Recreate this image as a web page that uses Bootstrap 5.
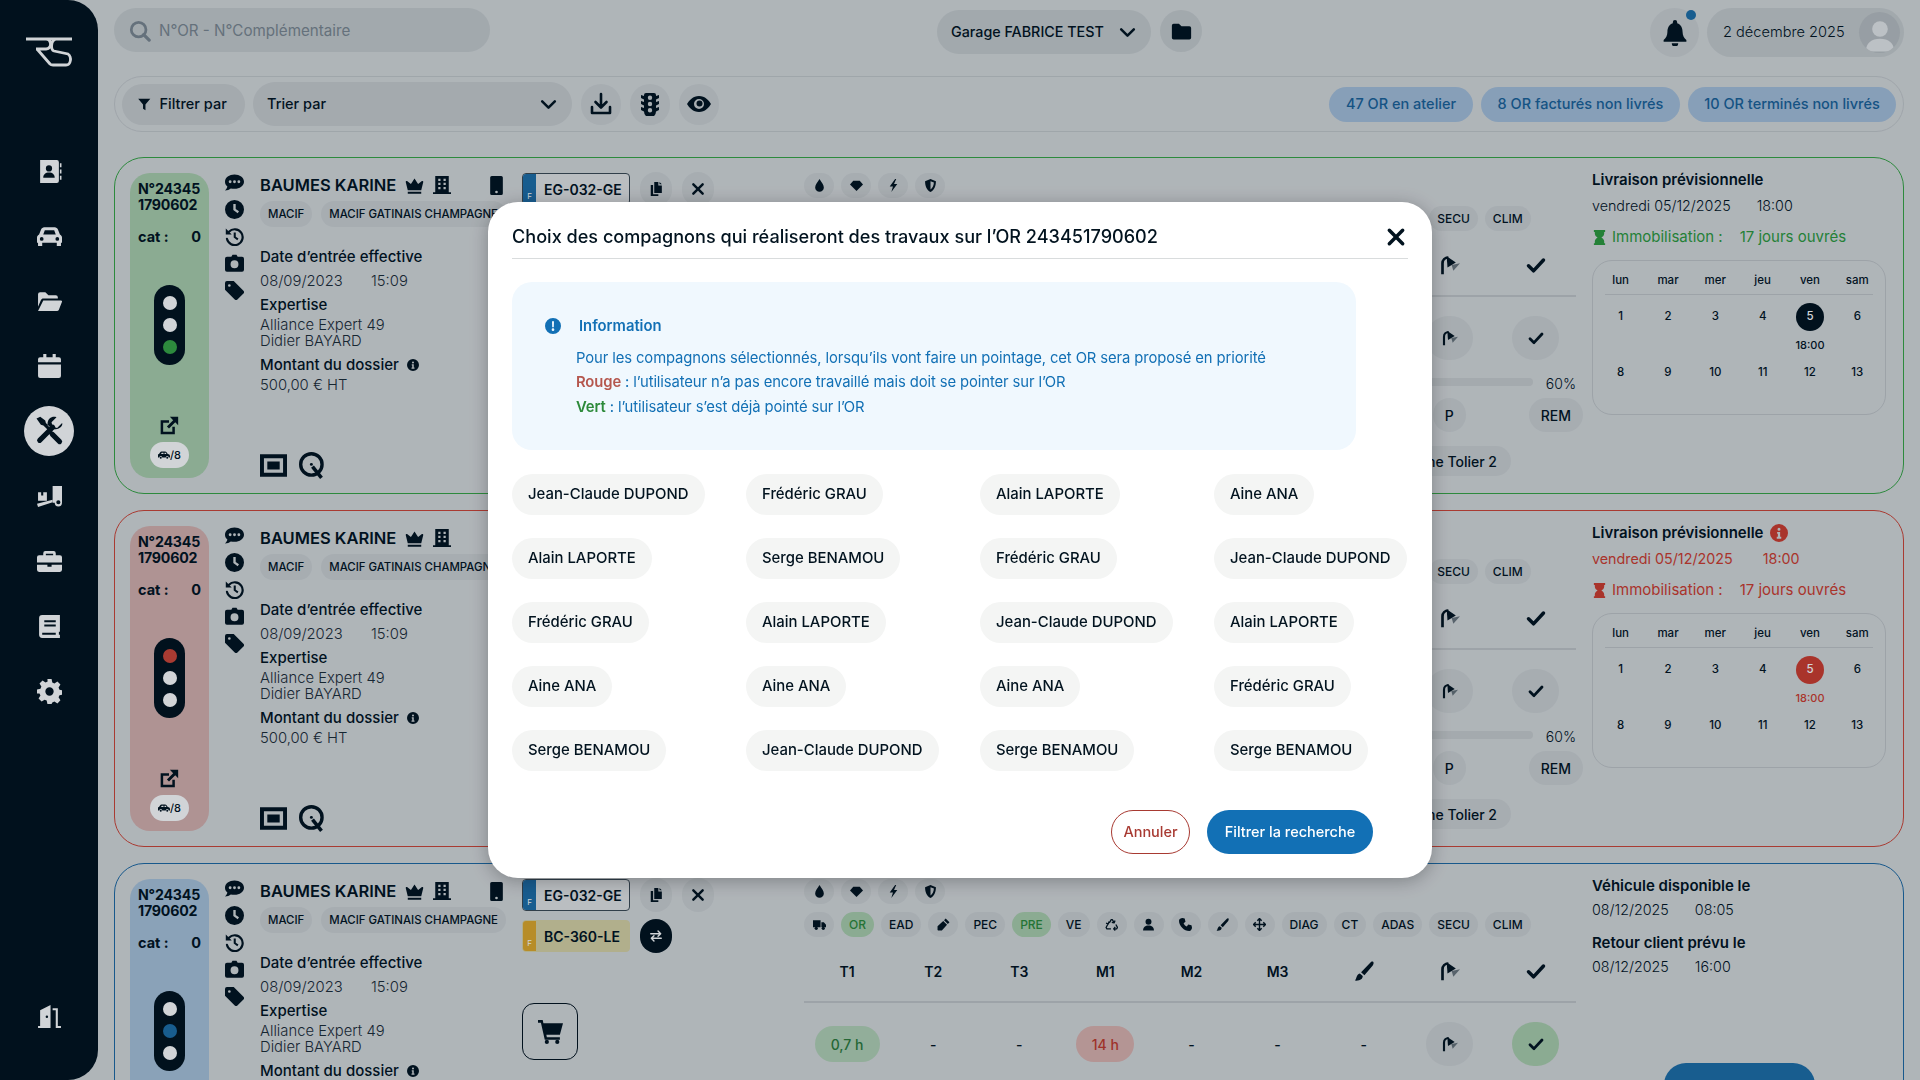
<!DOCTYPE html>
<html lang="fr">
<head>
  <meta charset="UTF-8">
  <meta name="viewport" content="width=device-width, initial-scale=1.0">
  <title>Ordres de réparation</title>
  <link href="https://cdn.jsdelivr.net/npm/bootstrap@5.3.0/dist/css/bootstrap.min.css" rel="stylesheet">
  <style>
    html, body { height: 100%; overflow: hidden; }
    body { background: #d6d9da; color: #02131f; font-family: Inter, "Noto Sans", sans-serif; font-size: 14px; }
    .ic { width: 1em; height: 1em; fill: currentColor; flex: none; display: block; }
    .app-side { width: 98px; height: 1080px; background: #02121d; border-radius: 0 30px 30px 0; color: #fff; flex: none; padding-top: 36px; }
    .side-logo { width: 50px; height: 32px; margin-bottom: 78px; }
    .side-item { width: 50px; height: 50px; margin-bottom: 15px; font-size: 25px; border-radius: 50%; }
    .side-item.on { background: #fff; color: #02121d; font-size: 30px; }
    .side-exit { margin-top: auto; margin-bottom: 39px; }
    .app-main { width: 1822px; padding: 0 16px; flex: none; }

    .top-row { height: 49px; margin-top: 8px; }
    .search-pill { width: 376px; height: 44px; background: #c6cbcc; color: #7c8790; font-size: 15.200px; padding: 2px 0 0 15px; gap: 8px; }
    .search-pill .ic { font-size: 22px; color: #7c8790; }
    .garage-pill { width: 214px; height: 44px; margin-left: 447px; margin-top: 2px; background: #c6cbcc; padding: 0 14px 0 14px; font-weight: 500; font-size: 14.300px; }
    .garage-pill .ic { font-size: 19px; }
    .round-btn { width: 42px; height: 42px; background: #c6cbcc; font-size: 21px; margin-left: 9px; margin-top: 2px; }
    .bell-btn { width: 49px; height: 49px; background: #ccd0d1; font-size: 26px; margin-left: auto; position: relative; }
    .bell-dot { position: absolute; width: 10px; height: 10px; top: 2px; right: 3px; background: #1e6ea8; border-radius: 50%; }
    .date-pill { width: 197px; height: 49px; margin-left: 8px; background: #c6cbcc; font-size: 14.600px; font-weight: 300; padding: 0 4px 0 16px; }
    .avatar { width: 41px; height: 41px; background: #b9bec1; color: #e6e8e9; overflow: hidden; }

    .tool-row { height: 56px; margin-top: 19px; border: 1px solid #c3c7c9; border-radius: 28px; padding: 0 7px; }
    .tool-pill { width: 123px; height: 41px; background: #c8cccd; font-weight: 500; font-size: 14.500px; padding: 0 0 0 15px; gap: 8px; margin-right: 8px; }
    .sort-pill { width: 319px; height: 44px; background: #c8cccd; font-weight: 500; font-size: 14.500px; padding: 0 14px 0 14px; margin-right: 9px; }
    .sort-pill .ic { font-size: 19px; }
    .tool-btn { width: 40px; height: 41px; background: #ccd0d1; font-size: 24px; margin-right: 9px; }
    .count-pill { height: 35px; background: #a5bfd9; color: #1a6299; font-weight: 500; font-size: 14.500px; margin-left: 8px; }

    .or-card { height: 337px; margin-top: 16px; border: 1px solid; border-radius: 30px; padding: 0 15px; }
    .or-green { border-color: #38a544; }
    .or-red { border-color: #cf4536; }
    .or-blue { border-color: #1e6aa4; }
    .or-status { width: 79px; height: 305px; margin-top: 15px; border-radius: 20px; padding: 8px 0 8px 8px; font-weight: 700; flex: none; }
    .or-green .or-status { background: #aaceab; }
    .or-red .or-status { background: #d6b0ad; }
    .or-blue .or-status { background: #a9c3da; }
    .or-num { font-size: 14.200px; line-height: 16px; letter-spacing: -.2px; }
    .or-cat { width: 63px; margin-top: 13px; font-size: 14.500px; }
    .feu { width: 31px; height: 80px; background: #02121d; border-radius: 16px; margin: 37px 0 0 16px; gap: 8px; }
    .feu i { width: 14px; height: 14px; background: #fff; border-radius: 50%; display: block; }
    .feu i.g { background: #38a544; }
    .feu i.r { background: #cf4536; }
    .feu i.b { background: #1e6ea8; }
    .or-open { font-size: 20px; margin: 51px 0 0 21px; }
    .or-veh { width: 39px; height: 26px; margin: 6px 0 0 12px; background: #fff; font-size: 11px; font-weight: 500; }
    .or-veh .ic { font-size: 12px; }

    .or-icons { width: 19px; margin: 15px 0 0 16px; font-size: 19px; gap: 8px; flex: none; }
    .or-info { width: 262px; margin: 17px 0 0 16px; flex: none; line-height: 16px; font-size: 14.800px; }
    .or-name { font-size: 16.500px; font-weight: 600; line-height: 20px; gap: 9px; }
    .or-name .ic { font-size: 19px; }
    .or-name > .ic:last-of-type { font-size: 18px; }
    .or-tags { margin-top: 6px; gap: 9px; white-space: nowrap; }
    .tag-pill { height: 26px; padding: 0 8px; background: #ccd0d1; font-size: 11.400px; font-weight: 500; }
    .info-label { font-weight: 500; font-size: 15px; }
    .info-val { font-weight: 300; color: #1c2b36; }
    .or-bottom { margin-top: 59px; gap: 12px; font-size: 27px; }

    .or-plates { width: 282px; margin-top: 14px; flex: none; }
    .plate-row { height: 34px; margin-bottom: 7px; }
    .plate { width: 108px; height: 32px; border: 1px solid #3c4a54; border-radius: 4px; overflow: hidden; background: #e3e5e5; font-weight: 600; font-size: 14px; }
    .plate-y { background: #d8d2a4; border-color: #d8d2a4; }
    .plate b { width: 13px; height: 100%; background: #1e6ea8; color: #fff; font-size: 8px; font-weight: 400; padding-bottom: 2px; margin-right: 8px; }
    .plate-y b { background: #e0a92a; }
    .plate-act { width: 32px; height: 34px; background: #ccd0d1; margin-left: 10px; font-size: 14px; }
    .plate-act.dark { background: #02121d; color: #fff; margin-left: 10px; }
    .cart-box { width: 56px; height: 57px; border: 1px solid #02121d; border-radius: 12px; font-size: 25px; margin-top: 50px; }

    .or-mid { width: 772px; flex: none; padding-top: 15px; }
    .mid-row { gap: 7px; margin-bottom: 8px; }
    .mini { height: 25px; min-width: 30px; padding: 0 8px; background: #ccd0d1; font-size: 12px; font-weight: 500; }
    .mini-ic { padding: 0; }
    .mini .ic { font-size: 13px; }
    .mini.ok { background: #aaceab; color: #2d8a3a; }
    .mid-grid { display: grid; grid-template-columns: repeat(9, 1fr); justify-items: center; align-items: center; margin-right: -3px; }
    .mid-head { height: 26px; margin-top: 21px; font-weight: 600; font-size: 14px; }
    .mid-head .ic { font-size: 20px; }
    .mid-line { margin: 17px 0 0; border-top: 2px solid #c0c4c6; opacity: 1; }
    .mid-vals { height: 44px; margin-top: 19px; font-weight: 500; font-size: 14px; }
    .val-pill { height: 36px; width: 65px; }
    .val-ok { background: #b3d1b5; color: #2d7a3a; }
    .val-bad { background: #dcb2ae; color: #c23a2c; width: 58px; }
    .val-round { width: 47px; height: 44px; background: #ccd0d1; font-size: 16px; }
    .val-round.ok { background: #aaceab; }
    .mid-prog { height: 19px; margin-top: 13px; gap: 13px; font-size: 14px; font-weight: 300; }
    .prog-bar { height: 8px; background: #c8cccd; border-radius: 4px; margin-top: 5px; overflow: hidden; }
    .prog-bar div { height: 100%; background: #38a544; }
    .mid-pr { margin-top: 6px; font-weight: 500; }
    .mid-pr span { height: 34px; background: #ccd0d1; padding: 0 12px; }
    .mid-to { margin-top: 14px; font-weight: 500; }
    .mid-to span { height: 30px; background: #ccd0d1; padding: 0 14px; margin-right: 65px; }

    .or-right { width: 294px; margin: 12px 0 0 16px; flex: none; }
    .right-title { font-size: 15px; font-weight: 600; line-height: 20px; gap: 7px; }
    .right-date { font-size: 14.300px; font-weight: 300; line-height: 20px; margin-top: 6px; }
    .right-date span { margin-left: 22px; }
    .right-date.tight { margin-top: 4px; }
    .right-gap { margin-top: 13px; }
    .right-imm { font-size: 15px; line-height: 20px; margin-top: 11px; gap: 5px; color: #2d9a3c; }
    .right-imm span + span { margin-left: 12px; }
    .or-red .right-date, .or-red .right-imm { color: #cf3c2e; font-weight: 400; }
    .or-red .right-date span { margin-left: 26px; }
    .cal-box { height: 155px; margin-top: 13px; border: 1px solid #c0c4c6; border-radius: 20px; padding: 11px 4px 0; font-weight: 500; font-size: 11.500px; }
    .cal-grid { display: grid; grid-template-columns: repeat(6, 1fr); justify-items: center; align-items: center; }
    .cal-head { height: 18px; }
    .cal-rule { height: 5px; margin: 0 8px; border-bottom: 1px solid #c0c4c6; }
    .cal-days { grid-auto-rows: 28px; margin-top: 8px; }
    .cal-time { height: 28px; grid-column: 5; font-size: 11px; }
    .cal-on { width: 28px; height: 28px; color: #fff; background: #02121d; border-radius: 50%; }
    .or-red .cal-on { background: #cf3c2e; }
    .or-red .cal-time { color: #cf3c2e; }
    .cal-blank { grid-column: 1 / 5; }
    .right-hot { color: #cf3c2e; font-size: 18px; }
    .deliver-btn { width: 151px; height: 44px; margin: 86px auto 0; background: #1e6ea8; color: #fff; font-weight: 500; }

    .modal-backdrop.show { background: #02131f; opacity: .18; }
    .comp-dialog { max-width: 944px; margin: 202px 0 0 488px; }
    .comp-content { height: 676px; border: 0; border-radius: 30px; box-shadow: 0 3px 18px rgba(0, 0, 0, .28); padding: 0 24px; }
    .comp-head { height: 57px; padding: 14px 0 0; border-bottom: 1px solid #d9dcdd; border-radius: 0; }
    .comp-title { font-size: 18.100px; font-weight: 500; }
    .comp-close { width: 24px; height: 24px; padding: 0; border: 0; background: none; color: #02131f; font-size: 20px; margin-right: 0; }
    .comp-info { width: 844px; height: 168px; margin-top: 23px; padding: 32px 33px; background: #f0f8fe; color: #1270b5; border: 0; border-radius: 20px; font-size: 14.800px; line-height: 24.500px; margin-bottom: 24px; }
    .comp-info .ic { font-size: 16px; margin-right: 18px; }
    .comp-info p { margin: 0 0 0 31px; letter-spacing: -.1px; }
    .comp-info-h { font-weight: 600; margin-bottom: 7px; }
    .txt-red { color: #b5574e; font-weight: 600; }
    .txt-green { color: #2d8a3a; font-weight: 600; }
    .comp-body { padding: 0; flex: none; }
    .comp-grid { display: grid; grid-template-columns: repeat(4, 234px); row-gap: 23px; }
    .comp-chip { height: 41px; padding: 0 16px; background: #f4f5f4; font-size: 14.900px; font-weight: 500; justify-self: start; white-space: nowrap; }
    .comp-foot { padding: 0 35px 0 0; border: 0; margin-top: 39px; gap: 17px; justify-content: flex-end; }
    .btn-cancel { height: 44px; width: 79px; padding: 0; margin: 0; border: 1px solid #a83a32; color: #a83a32; font-size: 14.500px; font-weight: 500; }
    .btn-apply { height: 44px; width: 166px; padding: 0; margin: 0; background: #1270b5; color: #fff; font-size: 14.500px; font-weight: 500; border: 0; }
  </style>
</head>
<body>

<svg width="0" height="0" class="position-absolute">
  <symbol id="i-book" viewBox="0 0 24 24"><path fill-rule="evenodd" d="M3 1h16a2 2 0 012 2v18a2 2 0 01-2 2H3zM11.500 6a3 3 0 100 6 3 3 0 000-6zM6 18h11c0-3-2-5-5.500-5S6 15 6 18z"/><path d="M22 4h1.500v4H22zM22 10h1.500v4H22zM22 16h1.500v4H22z"/></symbol>
  <symbol id="i-car" viewBox="0 0 24 24"><path fill-rule="evenodd" d="M7 3h10c1.500 0 2.500 1 3 2l2 5c1 .6 2 1.500 2 3v5h-1v3h-4v-3H5v3H1v-3H0v-5c0-1.500 1-2.400 2-3l2-5c.5-1 1.500-2 3-2zM7.500 6L6 10h12l-1.500-4zM4.500 12.500a1.800 1.800 0 100 3.600 1.800 1.800 0 000-3.600zM19.500 12.500a1.800 1.800 0 100 3.600 1.800 1.800 0 000-3.600z"/></symbol>
  <symbol id="i-fold-open" viewBox="0 0 24 24"><path d="M1 5a2 2 0 012-2h5l3 3h7a2 2 0 012 2v1H6c-1 0-1.800.5-2.200 1.500L1 17z"/><path d="M6 11h17c.8 0 1.200.6 1 1.300l-3 7.700c-.2.6-.8 1-1.500 1H1z"/></symbol>
  <symbol id="i-cal" viewBox="0 0 24 24"><path d="M6 0h3v3h6V0h3v3h3a2 2 0 012 2v3H1V5a2 2 0 012-2h3zM1 10h22v11a2 2 0 01-2 2H3a2 2 0 01-2-2z"/></symbol>
  <symbol id="i-tools" viewBox="0 0 24 24"><path d="M4.500 19.500L15 9M14.500 14.500l6 6" fill="none" stroke="currentColor" stroke-width="4" stroke-linecap="round"/><path d="M22.500 5.500l-4 4-3.500-1-1-3.500 4-4c-3.500-1.500-8 1.500-7 6.500l3 3c5 1 9.500-2 8.500-5zM2 2l3-1.500 4 3 .5 2 4.500 4.500-2 2-4.500-4.500-2-.5z"/></symbol>
  <symbol id="i-ramp" viewBox="0 0 24 24"><path fill-rule="evenodd" d="M15 2h9v16a3.500 3.500 0 01-7 0h-2zM20.500 15.500a2 2 0 100 4 2 2 0 000-4z"/><path d="M1 8h3v3h2V8h3.500v8H1zM0 19l15-4v2.500L1 22z"/></symbol>
  <symbol id="i-case" viewBox="0 0 24 24"><path fill-rule="evenodd" d="M8 2h8a2 2 0 012 2v2h4a2 2 0 012 2v5H0V8a2 2 0 012-2h4V4a2 2 0 012-2zM8.500 4.500V6h7V4.500z"/><path d="M0 15h10v2h4v-2h10v5a2 2 0 01-2 2H2a2 2 0 01-2-2z"/></symbol>
  <symbol id="i-manual" viewBox="0 0 24 24"><path fill-rule="evenodd" d="M5 1h17v16h-1v3h1v3H5a3 3 0 01-3-3V4a3 3 0 013-3zM5 18v2h13v-2zM7 6v2h11V6zM7 10v2h11v-2z"/></symbol>
  <symbol id="i-gear" viewBox="0 0 24 24"><path fill-rule="evenodd" d="M10 0h4l.7 3.300 2 .9 2.900-1.800 2.900 2.900-1.800 2.900.9 2 3.300.7v4l-3.300.7-.9 2 1.800 2.900-2.900 2.900-2.900-1.800-2 .9L14 24h-4l-.7-3.300-2-.9-2.900 1.800-2.900-2.900 1.800-2.900-.9-2L0 14v-4l3.300-.7.9-2L2.400 4.400l2.900-2.900 2.900 1.800 2-.9zM12 8a4 4 0 100 8 4 4 0 000-8z"/></symbol>
  <symbol id="i-exit" viewBox="0 0 24 24"><path fill-rule="evenodd" d="M13 1v22H1v-2h2V6zM9.500 11a1.200 1.200 0 100 2.400 1.200 1.200 0 000-2.400z"/><path d="M15 4h5v17h3v2h-5V6h-3z"/></symbol>
  <symbol id="i-search" viewBox="0 0 24 24"><circle cx="10.500" cy="10.500" r="8" fill="none" stroke="currentColor" stroke-width="3"/><path d="M16 16l6 6" stroke="currentColor" stroke-width="3.500" stroke-linecap="round"/></symbol>
  <symbol id="i-chev" viewBox="0 0 24 24"><path d="M4 8l8 8 8-8" fill="none" stroke="currentColor" stroke-width="3.200" stroke-linecap="round" stroke-linejoin="round"/></symbol>
  <symbol id="i-filter" viewBox="0 0 24 24"><path d="M2 3h20l-8 9.500V22l-4-2.500v-7z"/></symbol>
  <symbol id="i-down" viewBox="0 0 24 24"><path d="M12 2v13M6.500 10l5.500 5.500 5.500-5.500M3 15v6h18v-6" fill="none" stroke="currentColor" stroke-width="2.600" stroke-linecap="round" stroke-linejoin="round"/></symbol>
  <symbol id="i-feu" viewBox="0 0 24 24"><path fill-rule="evenodd" d="M8 1h8a2 2 0 012 2v1l3-1v3l-3 1.500V10l3-1v3l-3 1.500V16l3-1v3l-3 1.500A6 6 0 016 19.500L3 18v-3l3 1v-2.500L3 12V9l3 1V7.500L3 6V3l3 1V3a2 2 0 012-2zM12 3.500a2.200 2.200 0 100 4.400 2.200 2.200 0 000-4.400zM12 9.800a2.200 2.200 0 100 4.400 2.200 2.200 0 000-4.400zM12 16a2.200 2.200 0 100 4.400 2.200 2.200 0 000-4.400z"/></symbol>
  <symbol id="i-eye" viewBox="0 0 24 24"><path fill-rule="evenodd" d="M12 4C6 4 2 8.500 0 12c2 3.500 6 8 12 8s10-4.500 12-8c-2-3.500-6-8-12-8zM12 7a5 5 0 110 10 5 5 0 010-10z"/><circle cx="12.500" cy="11.500" r="3"/></symbol>
  <symbol id="i-bell" viewBox="0 0 24 24"><path d="M12 0a2 2 0 00-2 2v1C6.500 4 5 7.500 5 11c0 3.500-1.500 5.500-3.500 7.500V20h21v-1.500C20.500 16.500 19 14.500 19 11c0-3.500-1.500-7-5-8V2a2 2 0 00-2-2zM9 21.500a3 3 0 006 0z"/></symbol>
  <symbol id="i-folder" viewBox="0 0 24 24"><path d="M1 5a2 2 0 012-2h6l3 3h9a2 2 0 012 2v11a2 2 0 01-2 2H3a2 2 0 01-2-2z"/></symbol>
  <symbol id="i-user" viewBox="0 0 24 24"><circle cx="12" cy="7" r="5.500"/><path d="M2 23c0-6 4-9 10-9s10 3 10 9z"/></symbol>
  <symbol id="i-chat" viewBox="0 0 24 24"><path fill-rule="evenodd" d="M12 2C5.500 2 0 5.800 0 11c0 2.400 1.200 4.500 3 6-.3 1.800-1.300 3.500-3 5 3 0 5.500-1 7.300-2.500 1.500.4 3 .5 4.700.5 6.500 0 12-3.800 12-9s-5.500-9-12-9zM6.500 9.300a1.800 1.800 0 100 3.600 1.800 1.800 0 000-3.600zM12 9.300a1.800 1.800 0 100 3.600 1.800 1.800 0 000-3.600zM17.500 9.300a1.800 1.800 0 100 3.600 1.800 1.800 0 000-3.600z"/></symbol>
  <symbol id="i-clock" viewBox="0 0 24 24"><path fill-rule="evenodd" d="M12 0a12 12 0 100 24 12 12 0 000-24zM10.500 5h3v6.300l4.200 3-1.700 2.400-5.500-4z"/></symbol>
  <symbol id="i-hist" viewBox="0 0 24 24"><path d="M5 6a10 10 0 11-2.500 9" fill="none" stroke="currentColor" stroke-width="2.800" stroke-linecap="round"/><path d="M1 2l7.500 7.500H1zM11 7h2.600v5.200l3.400 2.400-1.500 2-4.500-3.200z"/></symbol>
  <symbol id="i-cam" viewBox="0 0 24 24"><path fill-rule="evenodd" d="M8 3.500L9.500 1h5L16 3.500h5.500A2.500 2.500 0 0124 6v14a2.500 2.500 0 01-2.500 2.500h-19A2.500 2.500 0 010 20V6a2.500 2.500 0 012.500-2.500zM12 8a5 5 0 100 10 5 5 0 000-10z"/></symbol>
  <symbol id="i-tag" viewBox="0 0 24 24"><path fill-rule="evenodd" d="M0 2.500A2.500 2.500 0 012.500 0h8.500l12.300 12.300a2.400 2.400 0 010 3.400l-7.600 7.600a2.400 2.400 0 01-3.400 0L0 11zM5.500 4a1.700 1.700 0 100 3.400 1.700 1.700 0 000-3.400z"/></symbol>
  <symbol id="i-crown" viewBox="0 0 24 24"><path d="M12 3l4.500 7L21 6.500c1-.5 2.500.3 2 1.500l-2.500 10h-17L1 8c-.5-1.200 1-2 2-1.500L7.500 10zM3.500 20h17v2.500h-17z"/></symbol>
  <symbol id="i-build" viewBox="0 0 24 24"><path fill-rule="evenodd" d="M3 0h18v21.500h3V24H0v-2.500h3zM7 3.500v3h3v-3zM14 3.500v3h3v-3zM7 9v3h3V9zM14 9v3h3V9zM7 14.500v3h3v-3zM14 14.500v3h3v-3z"/></symbol>
  <symbol id="i-mob" viewBox="0 0 24 24"><path fill-rule="evenodd" d="M6 0h12a2 2 0 012 2v20a2 2 0 01-2 2H6a2 2 0 01-2-2V2a2 2 0 012-2zM12 18.500a1.700 1.700 0 100 3.400 1.700 1.700 0 000-3.400z"/></symbol>
  <symbol id="i-info" viewBox="0 0 24 24"><path fill-rule="evenodd" d="M12 0a12 12 0 100 24 12 12 0 000-24zM12 5a2 2 0 110 4 2 2 0 010-4zM9.500 10.500h4V17h1.500v2.500H9V17h1.500v-4h-1z"/></symbol>
  <symbol id="i-warn" viewBox="0 0 24 24"><path fill-rule="evenodd" d="M12 0a12 12 0 100 24 12 12 0 000-24zM10.500 5h3l-.3 9h-2.400zM12 15.500a2 2 0 110 4 2 2 0 010-4z"/></symbol>
  <symbol id="i-ext" viewBox="0 0 24 24"><path d="M2 5h10v3H5v11h11v-6h3v9H2z"/><path d="M13 1h10v10l-3.500-3.500-7.500 7.500-2.500-2.500 7.500-7.500z"/></symbol>
  <symbol id="i-car2" viewBox="0 0 24 24"><path fill-rule="evenodd" d="M7 5h7c1.500 0 2.500.6 3.500 2l2 3c2.500.4 4.500 1.500 4.500 4v3h-2.500a3 3 0 00-6 0h-7a3 3 0 00-6 0H0v-5c0-1.500 1-2 2-2l2-3c1-1.500 1.800-2 3-2zM7.500 7.500L6 10h5V7.500zM13 7.500V10h4l-1.500-2.500z"/><circle cx="5.500" cy="17.500" r="2"/><circle cx="18.500" cy="17.500" r="2"/></symbol>
  <symbol id="i-hour" viewBox="0 0 24 24"><path d="M3 0h18v3h-1.500v2.500c0 3-2 5-4.500 6.500 2.500 1.500 4.500 3.500 4.500 6.500V21H21v3H3v-3h1.500v-2.500c0-3 2-5 4.500-6.500-2.500-1.500-4.500-3.500-4.500-6.500V3H3z"/></symbol>
  <symbol id="i-copy" viewBox="0 0 24 24"><path d="M9 0h7v6h6v13H9zM18 0l4 4h-4zM3 5h4v16h9v3H3z"/></symbol>
  <symbol id="i-x" viewBox="0 0 24 24"><path d="M4 4l16 16M20 4L4 20" fill="none" stroke="currentColor" stroke-width="4.200" stroke-linecap="round"/></symbol>
  <symbol id="i-swap" viewBox="0 0 24 24"><path d="M3 8h17M15.500 3.500L20 8l-4.500 4.500M21 16H4M8.500 11.500L4 16l4.500 4.500" fill="none" stroke="currentColor" stroke-width="2.500" stroke-linecap="round" stroke-linejoin="round"/></symbol>
  <symbol id="i-cart" viewBox="0 0 24 24"><path d="M0 1h4.500l.7 3H24l-3 11H8l.5 2.500H21V20H6.500L2.800 3.500H0z"/><circle cx="8.500" cy="22" r="2"/><circle cx="18.500" cy="22" r="2"/></symbol>
  <symbol id="i-drop" viewBox="0 0 24 24"><path d="M12 0c4 6.500 8 10.500 8 15.500a8 8 0 01-16 0C4 10.500 8 6.500 12 0z"/></symbol>
  <symbol id="i-gem" viewBox="0 0 24 24"><path d="M6 3h12l6 7-12 12L0 10z"/></symbol>
  <symbol id="i-bolt" viewBox="0 0 24 24"><path d="M15 0L5 14h6l-3 10 11-15h-6l4-9z"/></symbol>
  <symbol id="i-shield" viewBox="0 0 24 24"><path fill-rule="evenodd" d="M12 0l10 4c0 9-3 16.500-10 20C5 20.500 2 13 2 4zM12 4v15.500c3.500-2.700 6-7 6.300-13z"/></symbol>
  <symbol id="i-truck" viewBox="0 0 24 24"><path d="M0 4h14v13H0zM15.500 8H20l4 4.500V17h-8.500z"/><circle cx="6" cy="19" r="3"/><circle cx="19" cy="19" r="3"/></symbol>
  <symbol id="i-pen" viewBox="0 0 24 24"><path d="M16 1l7 7-3 3-7-7zM11.500 5.500l7 7L9 23H2l-1-1v-7z"/></symbol>
  <symbol id="i-rec" viewBox="0 0 24 24"><path d="M8 9l3.500-6h2l3 5M18.500 4.500L17 9l-4.500-1M20 12l3 5.500-1.500 2.500h-5M19 23l-3-3 3-3.500M11 20H3.500L2 17.500 5 12M2 9.500L6 11l1.500-4.500" fill="none" stroke="currentColor" stroke-width="2.400" stroke-linejoin="round"/></symbol>
  <symbol id="i-tel" viewBox="0 0 24 24"><path d="M6.500 0l4 1 1.500 6-3.500 2.500c1 3 3 5 6 6L17 12l6 1.500 1 4c0 3-2 6.500-5 6.500C9.500 24 0 14.500 0 5c0-3 3.500-5 6.500-5z"/></symbol>
  <symbol id="i-brush" viewBox="0 0 24 24"><path d="M23 1c1 1 .5 3-.5 4.500L12.500 17l-4-3.500L19.500 2c1-1 2.500-2 3.500-1zM7 15l3.500 3c0 3.500-3 6-9.500 5.500 2.500-2 1.500-7.500 6-8.500z"/></symbol>
  <symbol id="i-move" viewBox="0 0 24 24"><path d="M12 1v22M1 12h22M8 5l4-4 4 4M8 19l4 4 4-4M5 8l-4 4 4 4M19 8l4 4-4 4" fill="none" stroke="currentColor" stroke-width="2.600" stroke-linejoin="round"/></symbol>
  <symbol id="i-shower" viewBox="0 0 24 24"><path d="M3 23V10c0-4 3-7 7-7" fill="none" stroke="currentColor" stroke-width="3.200"/><path d="M8 1.500L19 9 9 15z"/><path d="M14 12l10-2-8 9z" opacity=".5"/></symbol>
  <symbol id="i-check" viewBox="0 0 24 24"><path d="M3 13l6 6L21 6" fill="none" stroke="currentColor" stroke-width="4.200" stroke-linecap="round" stroke-linejoin="round"/></symbol>
  <symbol id="i-scr" viewBox="0 0 24 24"><path fill-rule="evenodd" d="M0 2h24v20H0zM3.500 5.500v13h17v-13zM6.500 8.500h11v7h-11z"/></symbol>
  <symbol id="i-q" viewBox="0 0 24 24"><circle cx="11" cy="11" r="9.500" fill="none" stroke="currentColor" stroke-width="3"/><path d="M12 13l8 10" stroke="currentColor" stroke-width="3.200"/><circle cx="11" cy="11" r="1.300"/></symbol>
</svg>

<div class="d-flex">
  <nav class="app-side d-flex flex-column align-items-center">
    <svg class="side-logo" viewBox="0 0 50 32" fill="none" stroke="currentColor" stroke-width="2.800"><path d="M2 3h46M6 3h16c5 0 7 9 0 10H12M13 13l13 15c1 1 2 1 3 1h13c5 0 6-8 2-11L30 15c-3-1-4-10 2-12"/></svg>
    <div class="side-item d-flex align-items-center justify-content-center"><svg class="ic"><use href="#i-book"/></svg></div>
    <div class="side-item d-flex align-items-center justify-content-center"><svg class="ic"><use href="#i-car"/></svg></div>
    <div class="side-item d-flex align-items-center justify-content-center"><svg class="ic"><use href="#i-fold-open"/></svg></div>
    <div class="side-item d-flex align-items-center justify-content-center"><svg class="ic"><use href="#i-cal"/></svg></div>
    <div class="side-item on d-flex align-items-center justify-content-center"><svg class="ic"><use href="#i-tools"/></svg></div>
    <div class="side-item d-flex align-items-center justify-content-center"><svg class="ic"><use href="#i-ramp"/></svg></div>
    <div class="side-item d-flex align-items-center justify-content-center"><svg class="ic"><use href="#i-case"/></svg></div>
    <div class="side-item d-flex align-items-center justify-content-center"><svg class="ic"><use href="#i-manual"/></svg></div>
    <div class="side-item d-flex align-items-center justify-content-center"><svg class="ic"><use href="#i-gear"/></svg></div>
    <div class="side-item side-exit d-flex align-items-center justify-content-center"><svg class="ic"><use href="#i-exit"/></svg></div>
  </nav>

  <main class="app-main">
    <div class="top-row d-flex align-items-start">
      <div class="search-pill d-flex align-items-center rounded-pill"><svg class="ic"><use href="#i-search"/></svg>N°OR - N°Complémentaire</div>
      <div class="garage-pill d-flex align-items-center justify-content-between rounded-pill">Garage FABRICE TEST <svg class="ic"><use href="#i-chev"/></svg></div>
      <div class="round-btn d-flex align-items-center justify-content-center rounded-circle"><svg class="ic"><use href="#i-folder"/></svg></div>
      <div class="bell-btn d-flex align-items-center justify-content-center rounded-circle"><svg class="ic"><use href="#i-bell"/></svg><span class="bell-dot"></span></div>
      <div class="date-pill d-flex align-items-center justify-content-between rounded-pill">2 décembre 2025
        <span class="avatar d-flex align-items-end justify-content-center rounded-circle"><svg class="ic" style="font-size:34px"><use href="#i-user"/></svg></span>
      </div>
    </div>

    <div class="tool-row d-flex align-items-center">
      <div class="tool-pill d-flex align-items-center rounded-pill"><svg class="ic"><use href="#i-filter"/></svg>Filtrer par</div>
      <div class="sort-pill d-flex align-items-center justify-content-between rounded-pill">Trier par <svg class="ic"><use href="#i-chev"/></svg></div>
      <div class="tool-btn d-flex align-items-center justify-content-center rounded-pill"><svg class="ic"><use href="#i-down"/></svg></div>
      <div class="tool-btn d-flex align-items-center justify-content-center rounded-pill"><svg class="ic"><use href="#i-feu"/></svg></div>
      <div class="tool-btn d-flex align-items-center justify-content-center rounded-pill"><svg class="ic"><use href="#i-eye"/></svg></div>
      <div class="count-pill d-flex align-items-center justify-content-center rounded-pill ms-auto" style="width:144px">47 OR en atelier</div>
      <div class="count-pill d-flex align-items-center justify-content-center rounded-pill" style="width:199px">8 OR facturés non livrés</div>
      <div class="count-pill d-flex align-items-center justify-content-center rounded-pill" style="width:208px">10 OR terminés non livrés</div>
    </div>

    <div id="cards"></div>
  </main>
</div>

<div class="modal-backdrop show"></div>
<div class="modal d-block" tabindex="-1">
  <div class="modal-dialog comp-dialog">
    <div class="modal-content comp-content">
      <div class="modal-header comp-head">
        <h5 class="modal-title comp-title">Choix des compagnons qui réaliseront des travaux sur l’OR 243451790602</h5>
        <button type="button" class="comp-close d-flex align-items-center justify-content-center" aria-label="Fermer"><svg class="ic"><use href="#i-x"/></svg></button>
      </div>
      <div class="modal-body comp-body">
        <div class="alert comp-info">
          <div class="comp-info-h d-flex align-items-center"><svg class="ic"><use href="#i-warn"/></svg>Information</div>
          <p>Pour les compagnons sélectionnés, lorsqu’ils vont faire un pointage, cet OR sera proposé en priorité</p>
          <p><span class="txt-red">Rouge</span> : l’utilisateur n’a pas encore travaillé mais doit se pointer sur l’OR</p>
          <p><span class="txt-green">Vert</span> : l’utilisateur s’est déjà pointé sur l’OR</p>
        </div>
        <div class="comp-grid" id="chips"></div>
      </div>
      <div class="modal-footer comp-foot">
        <button type="button" class="btn btn-cancel rounded-pill">Annuler</button>
        <button type="button" class="btn btn-apply rounded-pill">Filtrer la recherche</button>
      </div>
    </div>
  </div>
</div>

<script src="https://cdn.jsdelivr.net/npm/bootstrap@5.3.0/dist/js/bootstrap.bundle.min.js"></script>
<script>
  const ic = name => `<svg class="ic"><use href="#i-${name}"/></svg>`;
  const center = 'd-flex align-items-center justify-content-center';

  // companion chips, row by row
  const people = [
    'Jean-Claude DUPOND', 'Frédéric GRAU', 'Alain LAPORTE', 'Aine ANA',
    'Alain LAPORTE', 'Serge BENAMOU', 'Frédéric GRAU', 'Jean-Claude DUPOND',
    'Frédéric GRAU', 'Alain LAPORTE', 'Jean-Claude DUPOND', 'Alain LAPORTE',
    'Aine ANA', 'Aine ANA', 'Aine ANA', 'Frédéric GRAU',
    'Serge BENAMOU', 'Jean-Claude DUPOND', 'Serge BENAMOU', 'Serge BENAMOU'
  ];
  document.getElementById('chips').innerHTML = people
    .map(name => `<span class="comp-chip d-flex align-items-center rounded-pill">${name}</span>`).join('');

  function calendar() {
    const head = ['lun', 'mar', 'mer', 'jeu', 'ven', 'sam'].map(d => `<span>${d}</span>`).join('');
    return `<div class="cal-box">
      <div class="cal-grid cal-head">${head}</div>
      <div class="cal-rule"></div>
      <div class="cal-grid cal-days">
        <span>1</span><span>2</span><span>3</span><span>4</span><span class="cal-on ${center}">5</span><span>6</span>
        <span class="cal-blank"></span><span class="cal-time ${center}">18:00</span><span></span>
        <span>8</span><span>9</span><span>10</span><span>11</span><span>12</span><span>13</span>
      </div>
    </div>`;
  }

  function rightColumn(type) {
    if (type === 'blue') {
      return `<div class="right-title">Véhicule disponible le</div>
        <div class="right-date tight">08/12/2025 <span>08:05</span></div>
        <div class="right-title right-gap">Retour client prévu le</div>
        <div class="right-date tight">08/12/2025 <span>16:00</span></div>
        <div class="deliver-btn ${center} rounded-pill">Livrer le véhicule</div>`;
    }
    const hot = type === 'red' ? `<span class="right-hot">${ic('info')}</span>` : '';
    return `<div class="right-title d-flex align-items-center">Livraison prévisionnelle ${hot}</div>
      <div class="right-date">vendredi 05/12/2025 <span>18:00</span></div>
      <div class="right-imm d-flex align-items-center">${ic('hour')}<span>Immobilisation :</span><span>17 jours ouvrés</span></div>
      ${calendar()}`;
  }

  function orCard(type, lights) {
    const miniIcons = ['drop', 'gem', 'bolt', 'shield'].map(n => `<span class="mini mini-ic ${center} rounded-pill">${ic(n)}</span>`).join('');
    const tags = ['#truck', 'OR+', 'EAD', '#pen', 'PEC', 'PRE+', 'VE', '#rec', '#user', '#tel', '#brush', '#move', 'DIAG', 'CT', 'ADAS', 'SECU', 'CLIM'].map(t => {
      if (t[0] === '#') return `<span class="mini mini-ic ${center} rounded-pill">${ic(t.slice(1))}</span>`;
      const on = t.endsWith('+');
      return `<span class="mini ${on ? 'ok' : ''} ${center} rounded-pill">${t.replace('+', '')}</span>`;
    }).join('');
    return `<div class="or-card or-${type} d-flex align-items-start">
      <div class="or-status">
        <div class="or-num">N°24345<br>1790602</div>
        <div class="or-cat d-flex justify-content-between"><span>cat :</span><span>0</span></div>
        <div class="feu d-flex flex-column align-items-center justify-content-center">${lights.map(l => `<i class="${l}"></i>`).join('')}</div>
        <div class="or-open">${ic('ext')}</div>
        <div class="or-veh ${center} rounded-pill">${ic('car2')}/8</div>
      </div>
      <div class="or-icons d-flex flex-column">${['chat', 'clock', 'hist', 'cam', 'tag'].map(ic).join('')}</div>
      <div class="or-info">
        <div class="or-name d-flex align-items-center">BAUMES KARINE ${ic('crown')} ${ic('build')} <span class="ms-auto" style="margin-right:16px">${ic('mob')}</span></div>
        <div class="or-tags d-flex"><span class="tag-pill d-flex align-items-center rounded-pill">MACIF</span><span class="tag-pill d-flex align-items-center rounded-pill">MACIF GATINAIS CHAMPAGNE</span></div>
        <div class="info-label" style="margin-top:22px">Date d’entrée effective</div>
        <div class="info-val" style="margin-top:8px">08/09/2023 <span class="ms-4">15:09</span></div>
        <div class="info-label" style="margin-top:8px">Expertise</div>
        <div class="info-val" style="margin-top:4px">Alliance Expert 49<br>Didier BAYARD</div>
        <div class="info-label d-flex align-items-center gap-2" style="margin-top:8px">Montant du dossier <span style="font-size:12px">${ic('info')}</span></div>
        <div class="info-val" style="margin-top:4px">500,00 € HT</div>
        <div class="or-bottom d-flex">${ic('scr')}${ic('q')}</div>
      </div>
      <div class="or-plates">
        <div class="plate-row d-flex align-items-center">
          <div class="plate d-flex align-items-center"><b class="d-flex align-items-end justify-content-center">F</b>EG-032-GE</div>
          <span class="plate-act ${center} rounded-pill">${ic('copy')}</span>
          <span class="plate-act ${center} rounded-pill">${ic('x')}</span>
        </div>
        <div class="plate-row d-flex align-items-center">
          <div class="plate plate-y d-flex align-items-center"><b class="d-flex align-items-end justify-content-center">F</b>BC-360-LE</div>
          <span class="plate-act dark ${center} rounded-pill">${ic('swap')}</span>
        </div>
        <div class="cart-box ${center}">${ic('cart')}</div>
      </div>
      <div class="or-mid">
        <div class="mid-row d-flex">${miniIcons}</div>
        <div class="mid-row d-flex">${tags}</div>
        <div class="mid-grid mid-head">
          <span>T1</span><span>T2</span><span>T3</span><span>M1</span><span>M2</span><span>M3</span>${ic('brush')}${ic('shower')}${ic('check')}
        </div>
        <hr class="mid-line">
        <div class="mid-grid mid-vals">
          <span class="val-pill val-ok ${center} rounded-pill">0,7 h</span><span>-</span><span>-</span>
          <span class="val-pill val-bad ${center} rounded-pill">14 h</span><span>-</span><span>-</span><span>-</span>
          <span class="val-round ${center} rounded-pill">${ic('shower')}</span>
          <span class="val-round ${type === 'blue' ? 'ok' : ''} ${center} rounded-pill">${ic('check')}</span>
        </div>
        <div class="mid-prog d-flex"><div class="prog-bar flex-grow-1"><div style="width:60%"></div></div>60%</div>
        <div class="mid-pr d-flex justify-content-end">
          <span class="d-flex align-items-center rounded-pill" style="margin-right:63px">P</span>
          <span class="d-flex align-items-center rounded-pill" style="margin-right:-7px">REM</span>
        </div>
        <div class="mid-to d-flex justify-content-end"><span class="d-flex align-items-center rounded-pill">Jérôme Tolier 2</span></div>
      </div>
      <div class="or-right">${rightColumn(type)}</div>
    </div>`;
  }

  document.getElementById('cards').innerHTML =
    orCard('green', ['', '', 'g']) + orCard('red', ['r', '', '']) + orCard('blue', ['', 'b', '']);
  // the cards follow the toolbar directly
  document.querySelector('.or-card').style.marginTop = '25px';
</script>

</body>
</html>
